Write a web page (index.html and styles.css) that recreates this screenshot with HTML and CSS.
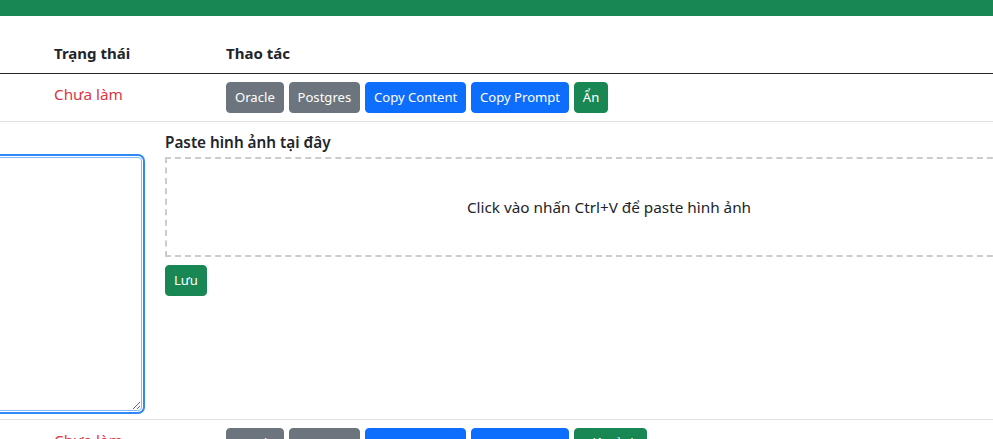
FILE: index.html
```html
<!DOCTYPE html>
<html lang="vi">
<head>
<meta charset="utf-8">
<title>Danh sách</title>
<link rel="stylesheet" href="styles.css">
</head>
<body>
<div class="topbar"></div>
<div class="viewport">
  <div class="scroller">
    <table class="table">
      <colgroup>
        <col class="col-name">
        <col class="col-status">
        <col class="col-action">
      </colgroup>
      <thead>
        <tr>
          <th></th>
          <th>Trạng thái</th>
          <th>Thao tác</th>
        </tr>
      </thead>
      <tbody>
        <tr>
          <td></td>
          <td class="status">Chưa làm</td>
          <td>
            <div class="actions">
              <button class="btn btn-secondary">Oracle</button>
              <button class="btn btn-secondary">Postgres</button>
              <button class="btn btn-primary">Copy Content</button>
              <button class="btn btn-primary">Copy Prompt</button>
              <button class="btn btn-success">Ẩn</button>
            </div>
          </td>
        </tr>
        <tr class="detail-row">
          <td colspan="3">
            <div class="detail">
              <div class="answer-col">
                <textarea class="answer"></textarea>
              </div>
              <div class="paste-col">
                <label class="paste-label">Paste hình ảnh tại đây</label>
                <div class="paste-box">Click vào nhấn Ctrl+V để paste hình ảnh</div>
                <button class="btn btn-success save">Lưu</button>
              </div>
            </div>
          </td>
        </tr>
        <tr>
          <td></td>
          <td class="status">Chưa làm</td>
          <td>
            <div class="actions">
              <button class="btn btn-secondary">Oracle</button>
              <button class="btn btn-secondary">Postgres</button>
              <button class="btn btn-primary">Copy Content</button>
              <button class="btn btn-primary">Copy Prompt</button>
              <button class="btn btn-success">Hiện ảnh</button>
            </div>
          </td>
        </tr>
      </tbody>
    </table>
  </div>
</div>
</body>
</html>
```
FILE: styles.css
```css
html, body {
  margin: 0;
  padding: 0;
  overflow: hidden;
  background: #fff;
}
body {
  font-family: "Segoe UI", "Noto Sans", "Open Sans", sans-serif;
  font-size: 15.3px;
  line-height: 24px;
  color: #212529;
}
.topbar {
  height: 16px;
  background: #198754;
}
.viewport {
  overflow: hidden;
  width: 993px;
}
.scroller {
  margin-left: -260px;
  padding-top: 17px;
}
.table {
  border-collapse: collapse;
  width: 1321px;
  table-layout: fixed;
}
.col-name { width: 306px; }
.col-status { width: 172px; }
.table th,
.table td {
  padding: 8px;
  text-align: left;
  vertical-align: top;
}
.table th {
  font-weight: 700;
  font-size: 15px;
  border-bottom: 1px solid #212529;
}
.table tbody td {
  border-bottom: 1px solid #dee2e6;
}
.status {
  color: #dc3545;
}
.actions {
  display: flex;
  gap: 4.75px;
  flex-wrap: nowrap;
}
.btn {
  display: inline-block;
  font-family: inherit;
  font-size: 13.1px;
  line-height: 21px;
  padding: 4px 8px;
  border: 1px solid transparent;
  border-radius: 4px;
  color: #fff;
  cursor: pointer;
  white-space: nowrap;
}
.btn-secondary { background: #6c757d; border-color: #6c757d; }
.btn-primary { background: #0d6efd; border-color: #0d6efd; }
.btn-success { background: #198754; border-color: #198754; }
.detail {
  display: flex;
  gap: 23px;
}
.answer-col {
  width: 394px;
  flex: none;
  padding-top: 27px;
}
.answer {
  display: block;
  box-sizing: border-box;
  width: 100%;
  height: 254px;
  border: 1px solid #86b7fe;
  border-radius: 4px;
  box-shadow: 0 0 0 1px #fff, 0 0 0 3px #2f86f5;
  outline: none;
  resize: vertical;
  margin: 0;
  font-family: inherit;
}
.paste-col {
  flex: 1;
  display: flex;
  flex-direction: column;
  align-items: flex-start;
}
.paste-label {
  font-weight: 600;
  margin-bottom: 3px;
}
.paste-box {
  box-sizing: border-box;
  width: 100%;
  height: 100px;
  border: 2px dashed #ccc;
  display: flex;
  align-items: center;
  justify-content: center;
}
.save {
  margin-top: 8px;
}
```
